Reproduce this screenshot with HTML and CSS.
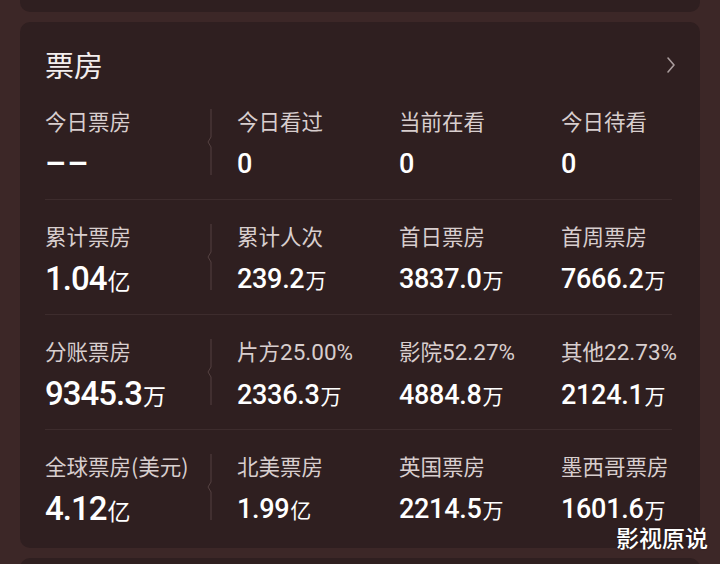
FILE: index.html
```html
<!DOCTYPE html>
<html lang="zh">
<head>
    <meta charset="UTF-8">
    <title>票房</title>
    <link rel="stylesheet" href="styles.css">
</head>
<body>
<div class="page">
    <div class="card-prev"></div>

    <div class="card">
        <div class="card-header">
            <span class="title">票房</span>
            <svg class="arrow" width="10" height="18" viewBox="0 0 10 18">
                <path d="M2 2 L8 9 L2 16" fill="none" stroke="#a99c9c" stroke-width="1.6" stroke-linecap="round" stroke-linejoin="round"/>
            </svg>
        </div>

        <!-- row 1 -->
        <div class="row">
            <div class="cell">
                <div class="label">今日票房</div>
                <div class="value big dash">––</div>
            </div>
            <div class="cell split">
                <svg class="divider" width="8" height="66" viewBox="0 0 8 66">
                    <path d="M6 0 V28 L3 33 L6 38 V66" fill="none" stroke="#554141" stroke-width="1"/>
                </svg>
                <div>
                    <div class="label">今日看过</div>
                    <div class="value">0</div>
                </div>
            </div>
            <div class="cell">
                <div class="label">当前在看</div>
                <div class="value">0</div>
            </div>
            <div class="cell">
                <div class="label">今日待看</div>
                <div class="value">0</div>
            </div>
        </div>

        <!-- row 2 -->
        <div class="row">
            <div class="cell">
                <div class="label">累计票房</div>
                <div class="value big">1.04<span class="unit">亿</span></div>
            </div>
            <div class="cell split">
                <svg class="divider" width="8" height="66" viewBox="0 0 8 66">
                    <path d="M6 0 V28 L3 33 L6 38 V66" fill="none" stroke="#554141" stroke-width="1"/>
                </svg>
                <div>
                    <div class="label">累计人次</div>
                    <div class="value">239.2<span class="unit">万</span></div>
                </div>
            </div>
            <div class="cell">
                <div class="label">首日票房</div>
                <div class="value">3837.0<span class="unit">万</span></div>
            </div>
            <div class="cell">
                <div class="label">首周票房</div>
                <div class="value">7666.2<span class="unit">万</span></div>
            </div>
        </div>

        <!-- row 3 -->
        <div class="row">
            <div class="cell">
                <div class="label">分账票房</div>
                <div class="value big">9345.3<span class="unit">万</span></div>
            </div>
            <div class="cell split">
                <svg class="divider" width="8" height="66" viewBox="0 0 8 66">
                    <path d="M6 0 V28 L3 33 L6 38 V66" fill="none" stroke="#554141" stroke-width="1"/>
                </svg>
                <div>
                    <div class="label">片方<span class="num">25.00%</span></div>
                    <div class="value">2336.3<span class="unit">万</span></div>
                </div>
            </div>
            <div class="cell">
                <div class="label">影院<span class="num">52.27%</span></div>
                <div class="value">4884.8<span class="unit">万</span></div>
            </div>
            <div class="cell">
                <div class="label">其他<span class="num">22.73%</span></div>
                <div class="value">2124.1<span class="unit">万</span></div>
            </div>
        </div>

        <!-- row 4 -->
        <div class="row last">
            <div class="cell">
                <div class="label">全球票房(美元)</div>
                <div class="value big">4.12<span class="unit">亿</span></div>
            </div>
            <div class="cell split">
                <svg class="divider" width="8" height="66" viewBox="0 0 8 66">
                    <path d="M6 0 V28 L3 33 L6 38 V66" fill="none" stroke="#554141" stroke-width="1"/>
                </svg>
                <div>
                    <div class="label">北美票房</div>
                    <div class="value">1.99<span class="unit">亿</span></div>
                </div>
            </div>
            <div class="cell">
                <div class="label">英国票房</div>
                <div class="value">2214.5<span class="unit">万</span></div>
            </div>
            <div class="cell">
                <div class="label">墨西哥票房</div>
                <div class="value">1601.6<span class="unit">万</span></div>
            </div>
        </div>

        <div class="watermark">影视原说</div>
    </div>

    <div class="card-next"></div>
</div>
</body>
</html>
```

FILE: styles.css
```css
body {
    margin: 0;
    background-color: #3c2727;
    font-family: "Noto Sans CJK SC", "Noto Sans", sans-serif;
    width: 720px;
    height: 564px;
    overflow: hidden;
}

.page {
    padding: 0 20px;
    display: flex;
    flex-direction: column;
    gap: 10px;
}

.card-prev {
    height: 12px;
    background-color: #2f1f20;
    border-radius: 0 0 10px 10px;
}

.card-next {
    height: 20px;
    background-color: #2f1f20;
    border-radius: 10px 10px 0 0;
}

.card {
    position: relative;
    height: 526px;
    background-color: #2f1f20;
    border-radius: 10px;
    padding: 0 28px 0 25px;
    box-sizing: border-box;
}

.card-header {
    height: 63px;
    display: flex;
    justify-content: space-between;
    align-items: flex-start;
    padding-top: 22px;
    box-sizing: border-box;
}

.title {
    font-size: 29px;
    line-height: 40px;
    color: #f3eeee;
}

.arrow {
    margin-top: 12px;
    margin-right: -4px;
}

.row {
    height: 115px;
    display: grid;
    grid-template-columns: 166px 188px 162px 1fr;
    border-bottom: 1px solid #3d2c2d;
    box-sizing: border-box;
}

.row.last {
    border-bottom: none;
}

.cell {
    padding-top: 21px;
}

.cell.split {
    display: flex;
    align-items: flex-start;
    padding-top: 0;
}

.cell.split > div {
    padding-top: 21px;
}

.divider {
    margin-top: 24px;
    margin-left: -6px;
    margin-right: 24px;
}

.label {
    font-size: 21.5px;
    line-height: 30px;
    color: #d8cece;
    white-space: nowrap;
}

.label .num {
    font-family: Roboto, sans-serif;
    font-size: 22.5px;
}

.value {
    font-family: Roboto, "Noto Sans CJK SC", sans-serif;
    font-size: 27px;
    line-height: 30px;
    margin-top: 13px;
    color: #ffffff;
    font-weight: 500;
    letter-spacing: -0.3px;
    white-space: nowrap;
}

.value.big {
    font-size: 33px;
    letter-spacing: -1px;
}

.value.dash {
    letter-spacing: 1px;
}

.unit {
    font-family: "Noto Sans CJK SC", sans-serif;
    font-size: 21px;
    font-weight: 400;
    letter-spacing: 0;
    margin-left: 1px;
}

.value.big .unit {
    font-size: 23px;
}

.watermark {
    position: absolute;
    right: -8px;
    bottom: 1px;
    font-size: 23px;
    line-height: 20px;
    font-weight: 500;
    color: #ffffff;
    text-shadow: 0 0 2px rgba(0, 0, 0, 0.4);
}
```
